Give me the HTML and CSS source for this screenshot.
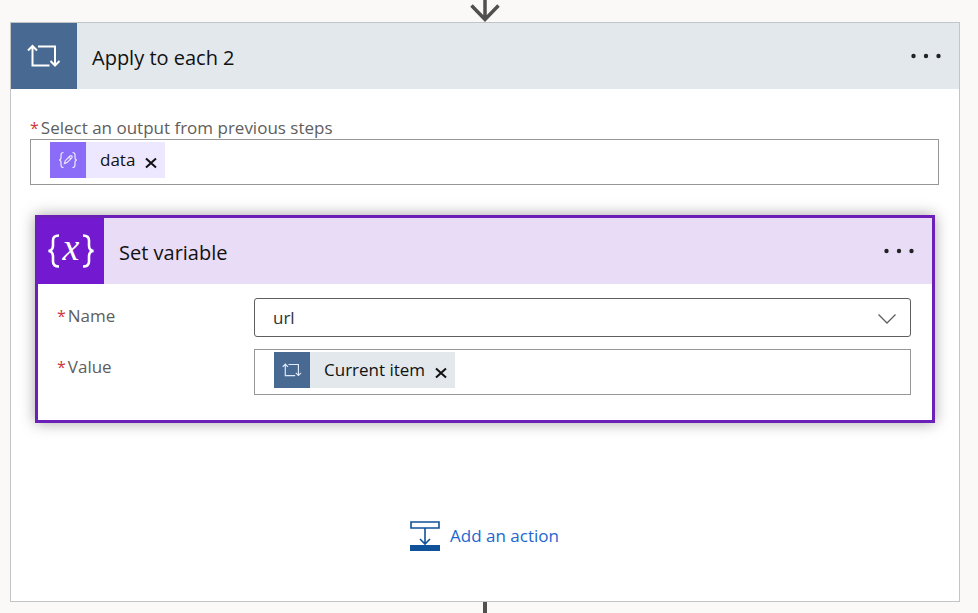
FILE: index.html
```html
<!DOCTYPE html>
<html lang="en">
<head>
<meta charset="utf-8">
<meta name="viewport" content="width=device-width, initial-scale=1">
<title>Apply to each 2</title>
<link rel="stylesheet" href="styles.css">
</head>
<body>
<svg width="0" height="0" class="sprite" aria-hidden="true">
  <symbol id="loop" viewBox="0 0 34 24">
    <path d="M5.500 2.500v19h17M11 2.500h17v18M1 6.500l4.500-4.500 4.500 4.500M23.500 17l4.500 4.500 4.500-4.500"/>
  </symbol>
  <symbol id="dots" viewBox="0 0 30 6">
    <circle cx="2.500" cy="3" r="2.200"/><circle cx="15" cy="3" r="2.200"/><circle cx="27.500" cy="3" r="2.200"/>
  </symbol>
  <symbol id="cross" viewBox="0 0 12 12">
    <path d="M1 1.500l10 9M11 1.500l-10 9"/>
  </symbol>
</svg>
<main class="flow">
  <div class="connector">
    <svg width="32" height="22" viewBox="0 0 32 22" aria-hidden="true">
      <path d="M16 0v19M2.500 5.500L16 19.500 29.500 5.500" fill="none" stroke="#505050" stroke-width="3.500"/>
    </svg>
  </div>
  <section class="card">
    <header class="bar">
      <span class="tile"><svg class="line" width="34" height="24"><use href="#loop"/></svg></span>
      <h1 class="title">Apply to each 2</h1>
      <button class="more" aria-label="More options"><svg width="30" height="6"><use href="#dots"/></svg></button>
    </header>
    <div class="content">
      <label class="label" for="output"><span class="star">*</span>Select an output from previous steps</label>
      <div class="tokens">
        <span class="chip violet">
          <span class="chip-icon">
            <svg width="20" height="20" viewBox="0 0 20 20" fill="none" stroke="#efeaff" stroke-width="1.200" aria-hidden="true">
              <path d="M5.500 2.500q-2.500 0-2.500 2.500v2.500q0 2.500-2 2.500 2 0 2 2.500v2.500q0 2.500 2.500 2.500M14.500 2.500q2.500 0 2.500 2.500v2.500q0 2.500 2 2.500-2 0-2 2.500v2.500q0 2.500-2.500 2.500M6.500 13.500l.8-2.800 4.700-4.700q1-.8 1.800 0t0 1.800l-4.700 4.800zM11 7l1.900 1.900"/>
            </svg>
          </span>
          <span>data</span>
          <button class="remove" aria-label="Remove data"><svg class="line" width="12" height="12"><use href="#cross"/></svg></button>
        </span>
        <input id="output" class="entry" type="text">
      </div>

      <section class="card selected">
        <header class="bar">
          <span class="tile">
            <svg width="50" height="56" viewBox="0 0 50 56" aria-hidden="true">
              <path d="M13 12.500q-6 0-6 5v5q0 5-4.500 5.500 4.500.5 4.500 5.500v5q0 5 6 5M37 12.500q6 0 6 5v5q0 5 4.500 5.500-4.500.5-4.500 5.500v5q0 5-6 5" fill="none" stroke="#fff" stroke-width="2.600"/>
              <text class="var" x="25" y="37" text-anchor="middle">x</text>
            </svg>
          </span>
          <h2 class="title">Set variable</h2>
          <button class="more" aria-label="More options"><svg width="30" height="6"><use href="#dots"/></svg></button>
        </header>
        <div class="fields">
          <label class="label" for="name"><span class="star">*</span>Name</label>
          <div class="picker">
            <select id="name"><option>url</option></select>
            <svg class="chevron" width="20" height="12" viewBox="0 0 20 12" aria-hidden="true"><path d="M1.500 1.500l8.500 8.500 8.500-8.500" fill="none" stroke="#605e5c" stroke-width="1.300"/></svg>
          </div>
          <label class="label" for="value"><span class="star">*</span>Value</label>
          <div class="tokens">
            <span class="chip">
              <span class="chip-icon"><svg class="line" width="20" height="14"><use href="#loop"/></svg></span>
              <span>Current item</span>
              <button class="remove" aria-label="Remove Current item"><svg class="line" width="12" height="12"><use href="#cross"/></svg></button>
            </span>
            <input id="value" class="entry" type="text">
          </div>
        </div>
      </section>

      <button class="add">
        <svg width="30" height="30" viewBox="0 0 30 30" aria-hidden="true">
          <path d="M1 1h28v6H1zM15 7v16M10 18l5 5 5-5" fill="none" stroke="#10529a" stroke-width="1.600"/>
          <path d="M0 24h30v6H0z" fill="#10529a"/>
        </svg>
        Add an action
      </button>
    </div>
  </section>
  <div class="connector stem"></div>
</main>
</body>
</html>
```
FILE: styles.css
```css
* {
  box-sizing: border-box;
}

body {
  margin: 0;
  background: #faf9f8;
  color: #111;
  font: 17px/24px "Open Sans", "Noto Sans", sans-serif;
}

button,
input,
select {
  font: inherit;
  color: inherit;
  border: 0;
  background: none;
  padding: 0;
}

button {
  cursor: pointer;
}

svg {
  display: block;
}

.sprite {
  position: absolute;
}

.line {
  fill: none;
  stroke: currentColor;
  stroke-width: 2;
}

.flow {
  display: flex;
  flex-direction: column;
  min-height: 100vh;
  padding: 0 18px 0 10px;
}

.connector {
  display: flex;
  justify-content: center;
}

.stem {
  flex: 1;
  align-self: center;
  width: 4px;
  background: #505050;
}

.card {
  background: #fff;
  border: 1px solid #c3c4c6;
}

.bar {
  display: flex;
  align-items: center;
  height: 66px;
  background: #e3e8ec;
}

.tile {
  display: flex;
  align-items: center;
  justify-content: center;
  width: 66px;
  height: 100%;
  background: #486991;
  color: #fff;
}

.title {
  flex: 1;
  margin: 0;
  padding: 4px 0 0 15px;
  font-size: 20px;
  font-weight: 400;
}

.more {
  margin-right: 18px;
  fill: #222;
}

.content {
  display: flex;
  flex-direction: column;
  padding: 28px 20px 50px 19px;
}

.label {
  color: #605e5c;
  line-height: 22px;
}

.star {
  margin-right: 2px;
  color: #d13438;
  font-size: 16px;
}

.tokens {
  display: flex;
  align-items: flex-start;
  height: 46px;
  padding: 2px 19px;
  border: 1px solid #979797;
  background: #fff;
}

.chip {
  display: flex;
  align-items: center;
  gap: 10px;
  height: 36px;
  padding-right: 8px;
  background: #e3e8ec;
}

.chip-icon {
  display: flex;
  align-items: center;
  justify-content: center;
  width: 36px;
  height: 36px;
  margin-right: 4px;
  background: #486991;
  color: #dfeaff;
}

.violet {
  background: #ede8ff;
}

.violet .chip-icon {
  background: #8a6cf9;
}

.remove {
  padding-top: 6px;
}

.entry {
  flex: 1;
  min-width: 0;
  height: 36px;
  outline: 0;
}

.selected {
  margin: 30px 4px 0 5px;
  border: 3px solid #6b20b8;
  box-shadow: 0 0 14px rgba(0, 0, 0, 0.35);
}

.selected .bar {
  background: #e9dcf6;
}

.selected .tile {
  background: #7319cf;
}

.var {
  fill: #fff;
  font: italic 38px "Liberation Serif", serif;
}

.fields {
  display: grid;
  grid-template-columns: 197px 1fr;
  row-gap: 12px;
  padding: 14px 21px 25px 19px;
}

.fields .label {
  padding-top: 7px;
}

.picker {
  position: relative;
}

.picker select {
  display: block;
  width: 100%;
  height: 39px;
  padding: 0 18px;
  border: 1px solid #605e5c;
  border-radius: 3px;
  background: #fff;
  color: #323130;
  appearance: none;
}

.chevron {
  position: absolute;
  top: 15px;
  right: 14px;
  pointer-events: none;
}

.add {
  display: flex;
  align-items: center;
  align-self: center;
  gap: 10px;
  margin-top: 98px;
  color: #2266d0;
}
```
